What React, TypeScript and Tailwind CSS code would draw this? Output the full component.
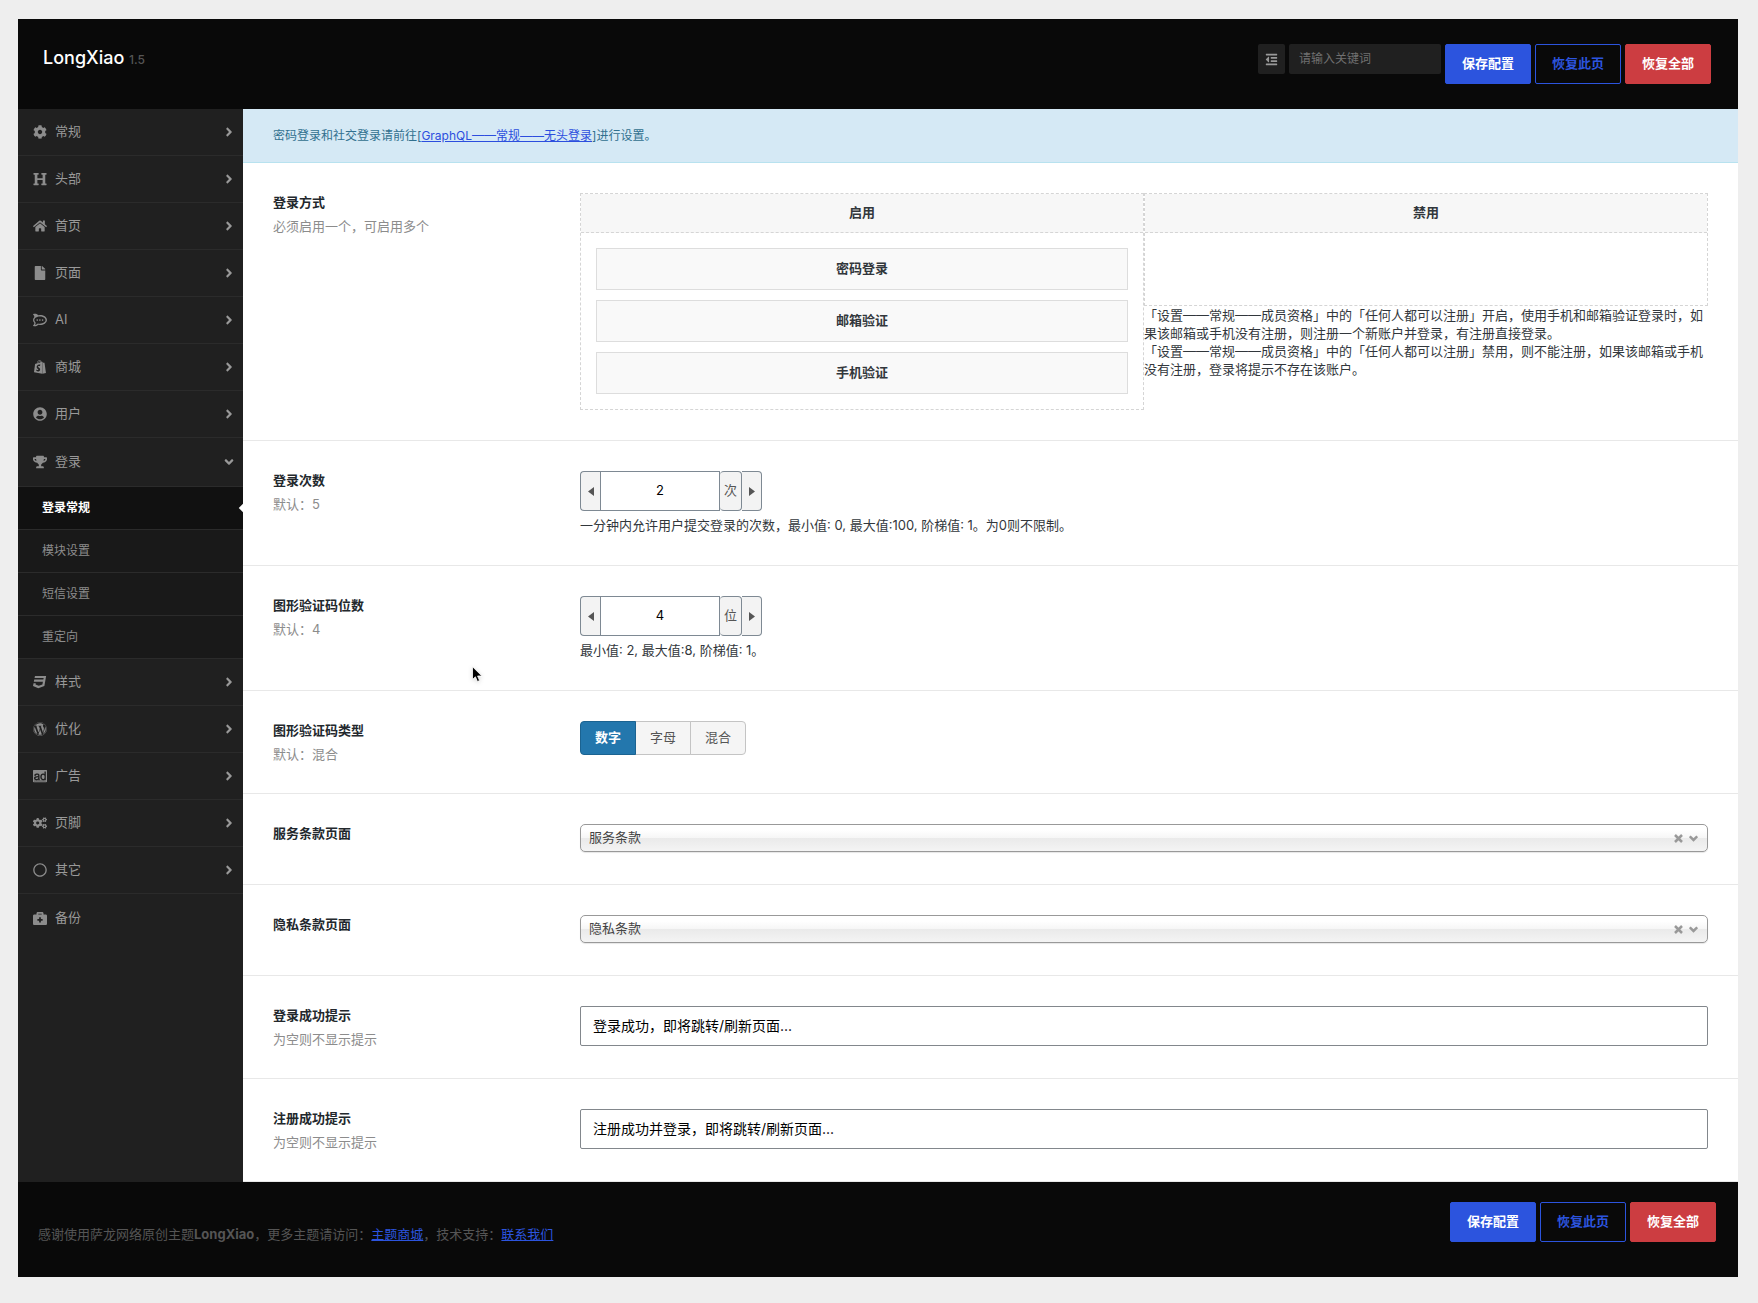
import React, { useState } from "react";
import {
  FaAdversal,
  FaAngleDown,
  FaAngleRight,
  FaBriefcaseMedical,
  FaCog,
  FaCogs,
  FaCss3,
  FaFile,
  FaHeading,
  FaHome,
  FaOutdent,
  FaRegCircle,
  FaRocketchat,
  FaShopify,
  FaTrophy,
  FaUserCircle,
  FaWordpress,
} from "react-icons/fa";
import type { IconType } from "react-icons";

interface NavItem {
  label: string;
  icon: IconType;
  children?: string[];
  leaf?: boolean;
}

const NAV: NavItem[] = [
  { label: "常规", icon: FaCog },
  { label: "头部", icon: FaHeading },
  { label: "首页", icon: FaHome },
  { label: "页面", icon: FaFile },
  { label: "AI", icon: FaRocketchat },
  { label: "商城", icon: FaShopify },
  { label: "用户", icon: FaUserCircle },
  { label: "登录", icon: FaTrophy, children: ["登录常规", "模块设置", "短信设置", "重定向"] },
  { label: "样式", icon: FaCss3 },
  { label: "优化", icon: FaWordpress },
  { label: "广告", icon: FaAdversal },
  { label: "页脚", icon: FaCogs },
  { label: "其它", icon: FaRegCircle },
  { label: "备份", icon: FaBriefcaseMedical, leaf: true },
];

function ActionButtons() {
  const base = "h-10 rounded-xs border px-4 text-[13px] font-bold";
  return (
    <div className="flex gap-1">
      <button className={`${base} border-[#2c54de] bg-[#2c54de] text-white`}>保存配置</button>
      <button className={`${base} border-[#2c54de] text-[#2c54de]`}>恢复此页</button>
      <button className={`${base} border-[#cc3d41] bg-[#cc3d41] text-white`}>恢复全部</button>
    </div>
  );
}

function Header() {
  return (
    <header className="flex h-[90px] items-start justify-between bg-[#090909] pt-[25px] pr-[27px] pl-[25px]">
      <h1 className="text-lg leading-7 font-medium text-white">
        LongXiao <small className="text-xs text-[#555]">1.5</small>
      </h1>
      <div className="flex items-start gap-1">
        <button
          aria-label="展开全部"
          className="flex h-[30px] w-[27px] items-center justify-center rounded-xs bg-[#202020] text-[#999]"
        >
          <FaOutdent size={13} />
        </button>
        <input
          type="text"
          aria-label="搜索"
          placeholder="请输入关键词"
          className="h-[30px] w-[152px] rounded-xs bg-[#202020] px-2.5 pb-0.5 text-xs text-[#999] placeholder:text-[#707070]"
        />
        <ActionButtons />
      </div>
    </header>
  );
}

function Sidebar() {
  const [active, setActive] = useState("登录常规");

  return (
    <nav className="w-[225px] shrink-0 bg-[#202020] text-[13px] text-[#999]">
      <ul>
        {NAV.map(({ label, icon: Icon, children, leaf }) => (
          <li key={label}>
            <a
              href="#"
              className={`flex items-center border-[#2b2b2b] pr-[7px] pl-3 ${children ? "h-[49px]" : "h-[47px]"} ${leaf ? "" : "border-b"}`}
            >
              <span className="flex w-5 justify-center text-[#8c8c8c]">
                <Icon size={14} />
              </span>
              <span className="ml-[5px] grow">{label}</span>
              {!leaf && (children ? <FaAngleDown size={14} /> : <FaAngleRight size={14} />)}
            </a>
            {children && (
              <ul className="bg-[#191919] text-xs">
                {children.map((child) => (
                  <li key={child}>
                    <a
                      href="#"
                      onClick={() => setActive(child)}
                      className={`relative flex h-[43px] items-center overflow-hidden border-b border-[#2b2b2b] pl-6 ${
                        child === active ? "bg-[#111] font-bold text-white" : "text-[#8c8c8c]"
                      }`}
                    >
                      {child}
                      {child === active && <span className="absolute -right-[3px] size-1.5 rotate-45 bg-white" />}
                    </a>
                  </li>
                ))}
              </ul>
            )}
          </li>
        ))}
      </ul>
    </nav>
  );
}

interface FieldProps {
  title: string;
  subtitle?: string;
  htmlFor?: string;
  children: React.ReactNode;
}

function Field({ title, subtitle, htmlFor, children }: FieldProps) {
  return (
    <div className="flex border-b border-[#e8e8e8] p-[30px] last:border-white">
      <div className="mr-5 w-1/5 shrink-0">
        <label htmlFor={htmlFor} className="block text-[13px] leading-[18px] font-bold text-[#23282d]">
          {title}
        </label>
        {subtitle && <p className="mt-1.5 text-[13px] leading-[18px] text-[#8c8c8c]">{subtitle}</p>}
      </div>
      <div className="min-w-0 grow">{children}</div>
    </div>
  );
}

function Sorter() {
  return (
    <div className="grid grid-cols-2 items-start text-[13px] text-[#32373c]">
      <div className="border border-dashed border-[#d5d5d5]">
        <h3 className="flex h-[39px] items-center justify-center border-b border-dashed border-[#d5d5d5] bg-[#f7f7f7] font-bold">
          启用
        </h3>
        <ul className="flex flex-col gap-2.5 p-[15px]">
          {["密码登录", "邮箱验证", "手机验证"].map((item) => (
            <li
              key={item}
              className="flex h-[42px] items-center justify-center border border-[#ddd] bg-[#f9f9f9] font-bold"
            >
              {item}
            </li>
          ))}
        </ul>
      </div>
      <div>
        <div className="border border-dashed border-[#d5d5d5]">
          <h3 className="flex h-[39px] items-center justify-center border-b border-dashed border-[#d5d5d5] bg-[#f7f7f7] font-bold">
            禁用
          </h3>
          <ul className="h-[72px]" />
        </div>
        <p className="leading-[18px]">
          「设置——常规——成员资格」中的「任何人都可以注册」开启，使用手机和邮箱验证登录时，如果该邮箱或手机没有注册，则注册一个新账户并登录，有注册直接登录。
          <br />
          「设置——常规——成员资格」中的「任何人都可以注册」禁用，则不能注册，如果该邮箱或手机没有注册，登录将提示不存在该账户。
        </p>
      </div>
    </div>
  );
}

interface SpinnerProps {
  id: string;
  initial: number;
  min: number;
  max: number;
  unit: string;
  help: string;
}

function Spinner({ id, initial, min, max, unit, help }: SpinnerProps) {
  const [value, setValue] = useState(initial);
  const box = "flex items-center justify-center border border-[#7e8993] bg-[#f3f3f3] text-[#555]";

  return (
    <>
      <div className="flex h-10">
        <button
          aria-label="减少"
          onClick={() => setValue(Math.max(min, value - 1))}
          className={`${box} w-5 rounded-l border-r-0`}
        >
          <svg width="6" height="9" viewBox="0 0 6 9" fill="currentColor">
            <path d="M6 0v9L0 4.500z" />
          </svg>
        </button>
        <input
          id={id}
          type="text"
          value={value}
          onChange={(e) => setValue(Number(e.target.value) || min)}
          className="w-[120px] border border-[#7e8993] bg-white text-center text-[13px] text-black"
        />
        <span className={`${box} w-[22px] rounded border-l-0 text-[13px]`}>{unit}</span>
        <button
          aria-label="增加"
          onClick={() => setValue(Math.min(max, value + 1))}
          className={`${box} w-5 rounded-r border-l-0`}
        >
          <svg width="6" height="9" viewBox="0 0 6 9" fill="currentColor">
            <path d="M0 0v9L6 4.500z" />
          </svg>
        </button>
      </div>
      <p className="mt-1 text-[13px] leading-5 text-[#32373c]">{help}</p>
    </>
  );
}

function CaptchaType() {
  const [type, setType] = useState("数字");
  return (
    <div className="flex text-[13px]">
      {["数字", "字母", "混合"].map((option) => (
        <button
          key={option}
          aria-pressed={option === type}
          onClick={() => setType(option)}
          className={`-ml-px h-[34px] border px-3.5 first:ml-0 first:rounded-l last:rounded-r ${
            option === type
              ? "z-10 border-[#1b6391] bg-[#2377ad] font-bold text-white"
              : "border-[#c4c4c4] bg-[#f5f5f5] text-[#555]"
          }`}
        >
          {option}
        </button>
      ))}
    </div>
  );
}

function PageSelect({ id, value }: { id: string; value: string }) {
  return (
    <div className="relative">
      <select
        id={id}
        className="block h-7 w-full appearance-none rounded-[5px] border border-[#999] bg-[linear-gradient(#fff_20%,#f6f6f6_50%,#eaeaea_52%,#f4f4f4_100%)] px-2 text-[13px] text-[#444] shadow-[0_1px_1px_rgba(0,0,0,0.1)]"
      >
        <option>{value}</option>
      </select>
      <div className="pointer-events-none absolute inset-y-0 right-2.5 flex items-center gap-1.5 text-[#999]">
        <svg width="9" height="9" viewBox="0 0 9 9" fill="none" stroke="currentColor" strokeWidth="2.500">
          <path d="M1 1l7 7M8 1l-7 7" />
        </svg>
        <svg width="9" height="7" viewBox="0 0 9 7" fill="none" stroke="currentColor" strokeWidth="2.500">
          <path d="M0.800 1.300L4.500 5l3.700-3.700" />
        </svg>
      </div>
    </div>
  );
}

function TextField({ id, value }: { id: string; value: string }) {
  return (
    <input
      id={id}
      type="text"
      defaultValue={value}
      className="block h-10 w-full rounded-xs border border-[#82878c] px-3 pb-0.5 text-sm text-black"
    />
  );
}

function Footer() {
  return (
    <footer className="flex h-[95px] items-start justify-between bg-[#090909] pt-5 pr-[22px] pl-5 text-[13px]">
      <p className="mt-[22px] leading-5 text-[#555]">
        感谢使用萨龙网络原创主题<strong>LongXiao</strong>，更多主题请访问：
        <a href="#" className="text-[#2c54de] underline">
          主题商城
        </a>
        ，技术支持：
        <a href="#" className="text-[#2c54de] underline">
          联系我们
        </a>
      </p>
      <ActionButtons />
    </footer>
  );
}

export default function App() {
  return (
    <div className="min-h-screen bg-[#eee] pt-[19px] pr-5 pb-[26px] pl-[18px] font-['Inter','Noto_Sans_CJK_SC',sans-serif]">
      <Header />
      <div className="flex">
        <Sidebar />
        <main className="relative min-w-0 grow bg-white">
          <div className="flex h-[54px] items-center border-b border-[#b8e2ef] bg-[#d5e9f5] px-[30px] text-xs text-[#31708f]">
            <p>
              密码登录和社交登录请前往[
              <a href="#" className="text-[#2c4ede] underline">
                GraphQL——常规——无头登录
              </a>
              ]进行设置。
            </p>
          </div>
          <Field title="登录方式" subtitle="必须启用一个，可启用多个">
            <Sorter />
          </Field>
          <Field title="登录次数" subtitle="默认：5" htmlFor="login-count">
            <Spinner
              id="login-count"
              initial={2}
              min={0}
              max={100}
              unit="次"
              help="一分钟内允许用户提交登录的次数，最小值: 0, 最大值:100, 阶梯值: 1。为0则不限制。"
            />
          </Field>
          <Field title="图形验证码位数" subtitle="默认：4" htmlFor="captcha-length">
            <Spinner
              id="captcha-length"
              initial={4}
              min={2}
              max={8}
              unit="位"
              help="最小值: 2, 最大值:8, 阶梯值: 1。"
            />
          </Field>
          <Field title="图形验证码类型" subtitle="默认：混合">
            <CaptchaType />
          </Field>
          <Field title="服务条款页面" htmlFor="terms-page">
            <div className="pb-0.5">
              <PageSelect id="terms-page" value="服务条款" />
            </div>
          </Field>
          <Field title="隐私条款页面" htmlFor="privacy-page">
            <div className="pb-0.5">
              <PageSelect id="privacy-page" value="隐私条款" />
            </div>
          </Field>
          <Field title="登录成功提示" subtitle="为空则不显示提示" htmlFor="login-message">
            <TextField id="login-message" value="登录成功，即将跳转/刷新页面..." />
          </Field>
          <Field title="注册成功提示" subtitle="为空则不显示提示" htmlFor="register-message">
            <TextField id="register-message" value="注册成功并登录，即将跳转/刷新页面..." />
          </Field>
          {/* mouse pointer */}
          <svg
            className="pointer-events-none absolute top-[557px] left-[229px] drop-shadow-sm"
            width="11"
            height="17"
            viewBox="0 0 11 17"
          >
            <path
              d="M0.500 0.700v12.800l2.900-2.700 2 4.700 2.200-.9-2-4.600h4.300z"
              fill="#000"
              stroke="#fff"
              strokeWidth="0.800"
            />
          </svg>
        </main>
      </div>
      <Footer />
    </div>
  );
}
